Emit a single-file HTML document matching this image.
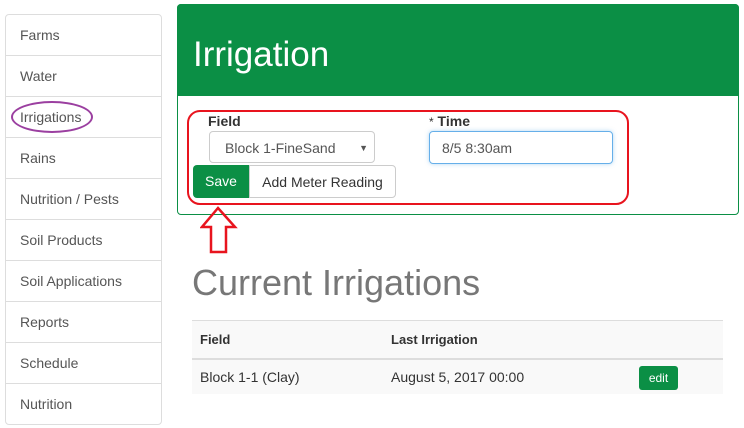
<!DOCTYPE html>
<html><head><style>
body{margin:0;width:744px;height:428px;background:#fff;font-family:"Liberation Sans",Arial,sans-serif;position:relative;overflow:hidden;color:#333}
.a{position:absolute}
.side{left:5px;top:14px;width:155px;height:409px;border:1px solid #ddd;border-radius:4px}
.side div{height:40px;border-bottom:1px solid #ddd;font-size:14px;color:#555;padding-left:14px;line-height:41px;box-sizing:border-box;height:41px}
.side div:last-child{border-bottom:none}
</style></head><body>
<div class="a side">
<div>Farms</div><div>Water</div><div>Irrigations</div><div>Rains</div><div>Nutrition / Pests</div><div>Soil Products</div><div>Soil Applications</div><div>Reports</div><div>Schedule</div><div>Nutrition</div>
</div>
<div class="a" style="left:11px;top:101px;width:78px;height:28px;border:2px solid #9b3fa0;border-radius:50%"></div>
<div class="a" style="left:177px;top:4px;width:560px;height:209px;border:1px solid #0b8f45;border-radius:4px"></div>
<div class="a" style="left:177px;top:4px;width:562px;height:92px;background:#0b8f45;border-radius:4px 4px 0 0"></div>
<div class="a" style="left:193px;top:35px;font-size:35px;color:#fff">Irrigation</div>
<div class="a" style="left:187px;top:110px;width:438px;height:91px;border:2px solid #e8141e;border-radius:13px"></div>
<div class="a" style="left:208px;top:113px;font-size:14px;font-weight:bold">Field</div>
<div class="a" style="left:209px;top:131px;height:32px;border:1px solid #ccc;border-radius:4px;font-size:14px;line-height:32px;color:#555;padding-left:15px;box-sizing:border-box;width:166px">Block 1-FineSand<span style="position:absolute;right:6px;font-size:9px">▼</span></div>
<div class="a" style="left:429px;top:113px;font-size:14px;font-weight:bold"><span style="font-weight:normal;font-size:12px">*</span> Time</div>
<div class="a" style="left:429px;top:131px;width:184px;height:33px;border:1px solid #66afe9;border-radius:4px;font-size:14px;line-height:33px;color:#555;padding-left:12px;box-sizing:border-box;box-shadow:0 0 4px rgba(102,175,233,.5)">8/5 8:30am</div>
<div class="a" style="left:193px;top:165px;width:56px;height:33px;background:#0b8f45;border-radius:4px 0 0 4px;color:#fff;font-size:14px;line-height:33px;text-align:center">Save</div>
<div class="a" style="left:249px;top:165px;width:147px;height:33px;border:1px solid #ccc;border-radius:0 4px 4px 0;font-size:14px;line-height:33px;text-align:center;box-sizing:border-box">Add Meter Reading</div>
<svg class="a" style="left:200px;top:205px" width="40" height="50"><path d="M18 3 L35 22 L26 22 L26 47 L11 47 L11 22 L2 22 Z" fill="none" stroke="#e8141e" stroke-width="2.5"/></svg>
<div class="a" style="left:192px;top:262px;font-size:36px;color:#777">Current Irrigations</div>
<div class="a" style="left:192px;top:320px;width:531px;height:37px;background:#f9f9f9;border-top:1px solid #ddd;border-bottom:2px solid #ddd;font-size:13px;font-weight:bold;line-height:37px"><span style="position:absolute;left:8px">Field</span><span style="position:absolute;left:199px">Last Irrigation</span></div>
<div class="a" style="left:192px;top:360px;width:531px;height:34px;background:#f9f9f9;font-size:14px;line-height:34px"><span style="position:absolute;left:8px">Block 1-1 (Clay)</span><span style="position:absolute;left:199px">August 5, 2017 00:00</span><span style="position:absolute;left:447px;top:6px;width:39px;height:24px;background:#0b8f45;color:#fff;border-radius:3px;font-size:12px;line-height:24px;text-align:center">edit</span></div>
</body></html>
